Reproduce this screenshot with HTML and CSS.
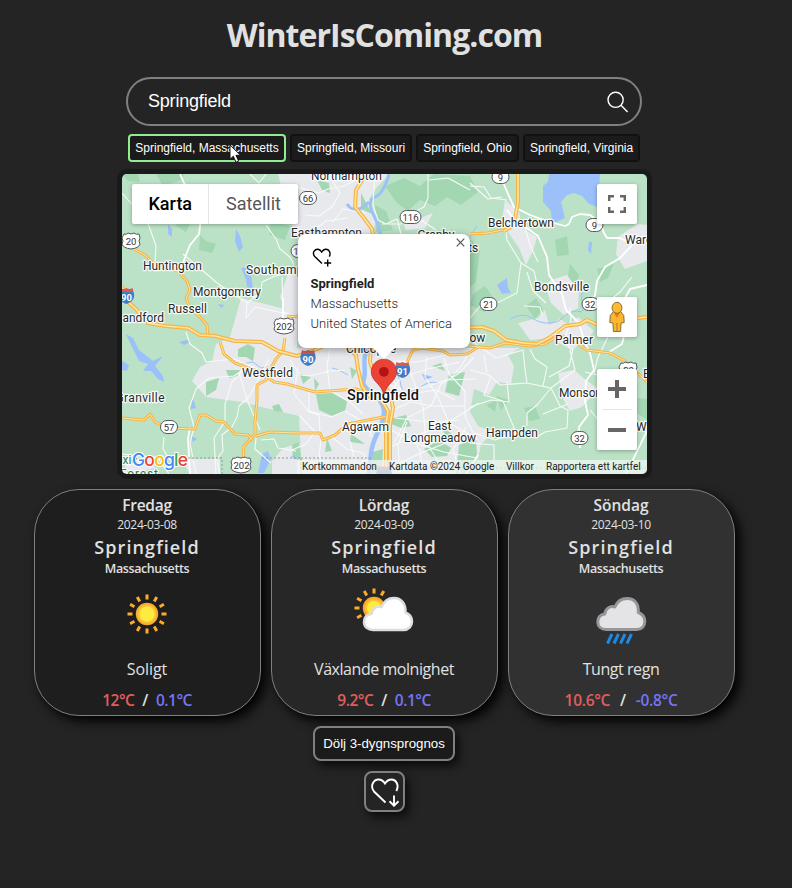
FILE: index.html
```html
<!DOCTYPE html>
<html lang="sv">
<head>
<meta charset="utf-8">
<title>WinterIsComing.com</title>
<link rel="stylesheet" href="styles.css">
</head>
<body>
<main class="page">
  <h1 class="title">WinterIsComing.com</h1>
  <div class="search">
    <span class="search-text">Springfield</span>
    <svg class="search-icon" width="22" height="22" viewBox="0 0 22 22"><circle cx="8.600" cy="8.800" r="7.600"/><path d="M14 14.300 20.600 21"/></svg>
  </div>
  <div class="suggestions">
    <button class="chip active">Springfield, Massachusetts</button>
    <button class="chip">Springfield, Missouri</button>
    <button class="chip">Springfield, Ohio</button>
    <button class="chip">Springfield, Virginia</button>
    <svg class="cursor" width="14" height="20" viewBox="0 0 14 20"><path d="M1 1V15.300L4.300 12.200 7 18.300 9.600 17.100 7 11.300H11.600Z"/></svg>
  </div>

  <section class="map">
    <svg class="map-canvas" width="525" height="300" viewBox="122 174 525 300">
      <rect class="land" x="122" y="174" width="525" height="300"/>
      <g class="forest">
        <path d="M156 174 184 174 181 180 163 186ZM122 174 138 174 140 182 128 181ZM200 235 206 241 216 244 212 253 199 250ZM208 198 222 190 226 204 214 213ZM180 214 192 220 186 232 176 226ZM270 220 290 226 285 240 270 235ZM385 186 404 178 420 186 434 174 470 176 478 192 461 205 447 197 435 206 420 200 408 211 397 203ZM375 205 386 211 393 230 376 232ZM555 240 567 236 569 255 557 256ZM570 264 579 275 576 288 567 282ZM473 294 485 286 492 296 484 312 470 305ZM526 306 536 298 543 309 535 319ZM597 269 614 264 608 278 600 282ZM470 240 480 250 476 282 469 288ZM240 345 256 346 250 362ZM620 396 647 399 647 420 637 413 620 416ZM496 396 509 400 501 410ZM524 408 535 406 540 419 529 421ZM560 380 568 378 566 390Z"/>
      </g>
      <g class="urban">
        <path d="M241 298 297 312V348H520L508 355 514 366 511 384 497 382 489 395 474 389 470 412 478 426 494 432 481 444 475 474H302L299 416 241 402 206 397 192 381 200 367 212 361 216 344 230 337Z"/>
        <path d="M278 174H390L377 187 369 199 376 217 373 236 340 250 310 243 291 230 297 210 285 201Z"/>
        <path d="M505 200 519 212 522 228 537 237 533 251 526 265 519 248 508 232 502 220ZM637 224 647 225V261L625 269 616 254 618 237ZM551 280 567 275 579 291 578 308 564 315 551 303 545 286ZM518 323 538 318 545 310 549 325 560 319 569 325 578 317 594 331 585 341 572 350 550 338 530 340ZM558 373 574 370 586 380 598 389 582 407 570 411 563 399ZM283 448 300 443V474H272V461ZM181 459H220V474H190ZM123 463 150 458 155 468 130 474ZM401 218 416 220 433 213 425 228 406 230ZM290 268H298V314H287L280 297Z"/>
      </g>
      <g class="forest">
        <path d="M238 349 248 344 255 348 253 361 246 357 238 357ZM206 382 219 378 216 390 206 396ZM226 370 240 370 238 376 229 378ZM272 406 279 404 283 412 274 411ZM316 394 332 393 347 401 345 412 332 416 319 410ZM314 378 319 384 315 391ZM393 418 406 415 411 426 401 428 391 424ZM373 452 383 449 382 473 372 473ZM327 438 332 451 325 452ZM449 375 465 372 459 396 445 392ZM432 366 441 363 445 371ZM350 367 357 371 352 379ZM424 449 439 440 451 448 447 456 432 457ZM440 425 456 437 449 442ZM292 445 299 442 301 459 293 459ZM459 445 476 438 478 474H456ZM486 405 497 400 495 412ZM317 180 329 183 330 193 322 190ZM361 193 372 214 361 209ZM300 374 311 377 303 384ZM351 434 365 444 350 442Z"/>
      </g>
      <g class="water">
        <path d="M126 334 133 338 139 350 153 361 163 356 155 366 163 376 164 382 158 379 151 371 143 371 148 364 139 361 134 351ZM179 342 187 340 190 342 184 345ZM122 361 129 365 127 371 122 370ZM241 268 249 267 251 274 253 289 247 287 246 279ZM236 229 240 236 243 247 239 252 235 241ZM168 224 172 229 172 237 168 234ZM543 186 548 182 549 174H600L598 207 589 204 582 196 574 193 567 195 561 202 565 218 552 224 551 211 543 202ZM497 285 507 278 508 288 511 293 502 294ZM589 242 592 242 591 254 588 250ZM192 396 196 408 191 409ZM191 436 197 439 193 442ZM262 454 268 451 271 459 264 473H258ZM422 374 433 377 425 380ZM218 304 225 305 221 308Z"/>
        <path class="river" d="M389 174Q384 193 375 197T374 216T380 240M347 204q8 12 22-2"/>
        <path class="river wide" d="M369 345C360 360 368 371 363 382 364 393 382 393 384 411 384 427 373 435 371 453L369 474"/>
        <path class="thin" d="M391 369q9 6 10 17t19 2q8-8 18-5M242 364l11-2 8 6 7-1 3 8M510 319q13-7 22-1t18 5 10-3q11-12 22-8M348 375q-10-6-16-7M298 460q-2-4-7-4M477 226q-7 8-9 17M583 287q-3 12 0 24"/>
      </g>
      <g class="minor">
        <path d="M122 193 129 201 141 213 149 226 156 246 155 262M250 174 259 183 266 174M266 225 276 239 280 249 290 257 294 265M297 270 273 277 262 282 261 291 248 303 232 294 216 282 202 270 183 254M247 303 246 318 255 307 292 315M282 277 283 312 300 318M186 332 190 344 202 353 206 362 234 359 258 369M209 378 196 389 189 408 194 427 190 443 196 474M209 378 234 376 247 367M247 367 232 382 225 404 225 421 214 438 216 474M239 373 248 402 260 430M269 359 249 397 239 406 237 417 232 427 222 435 223 451 217 459 220 474M164 437 163 449 170 460 189 465M122 454 158 458 169 474M261 440 274 439 278 448 296 451M256 438 255 449 271 463"/>
        <path d="M297 187 319 193 328 189 344 186 356 180M328 174 340 193 332 207 319 216 305 215M313 247 309 234 326 221 348 218M365 213 343 209 333 222M375 174 374 187 373 205 378 220 386 224 397 219M428 174 428 198 424 207 408 215 401 224 382 224M397 219 401 234M436 230 421 220 409 224M470 190 448 178 429 180M470 183 488 199 502 197"/>
        <path d="M470 186 484 187 491 198 507 200M505 223 507 240 521 263 534 271 537 284M521 263 517 293 499 302 482 304 470 318M527 272 533 291 546 303M525 227 530 245 538 262M470 370 489 375 500 385 527 383M470 340 496 358 523 350 525 369 527 383 551 388 575 370 570 350M507 382 509 402 491 400 470 407M491 376 484 395 503 401 516 433 495 440 475 433M530 349 535 359 547 367 543 386M551 388 537 405 527 413 527 426M551 388 560 406 568 410 567 428 545 432 535 438M470 443 494 445 494 464M543 414 568 404M585 372 598 375M590 410 600 422M573 351 564 341 571 320 570 308M549 377 569 366 573 349M524 306 540 307 542 315M632 277 620 292 609 301 609 335 598 357 594 373"/>
        <path d="M290 360 300 375 310 376 329 371 345 370M298 367 294 394 309 412 319 415 320 433M330 348 327 366 330 390 351 403 363 414M309 392 309 411 331 417 345 411 360 420M300 416 315 432 306 444 292 450M321 440 319 456 327 470M332 437 347 449 363 453 372 470M350 441 357 470M369 420 371 437M394 361 417 362 445 355M398 400 411 389 426 387 446 380 476 379M390 411 411 402 432 406 464 406M384 399 402 377 428 369 460 362M405 360 414 382 423 407 426 442 446 474M427 357 425 377 438 397 449 423 469 434M444 358 449 374 465 391 465 417 477 440M474 357 458 374 441 384 431 406 407 418 394 443M395 418 421 421 439 422 459 420M391 430 414 443 444 452 477 458M390 447 411 438 447 423 479 403M394 466 421 453 453 440M423 474 420 451 412 437M460 474 453 450 466 427M401 389 388 376M390 385 410 394 436 390 455 400M471 348 462 365 451 378M484 355 487 373M400 474 398 445 407 422"/>
      </g>
      <g class="local">
        <path d="M501 177 508 194 514 207 530 215 550 222 565 226 569 224 572 217 580 214 590 215 600 222 604 233 607 238 620 238 628 242 635 242 647 236M507 210 514 219 538 236 547 257 549 275 562 294 566 310 579 323 585 343 590 353 594 370 586 381 585 401 588 415 579 427 580 448M635 242 620 258 605 267 597 281 595 295 591 303M606 354 622 344 625 332M201 218 199 234 190 245 186 255 180 270M204 221 199 213 201 207 184 183 180 174M647 431 626 474M190 427 188 439 190 474M283 298 283 325M647 285 630 289 624 300M466 474 478 455"/>
      </g>
      <path class="border" d="M144 458H222V474M262 458H301V468H647M301 458H372"/>
      <g class="road-case">
        <path id="r1" d="M134 249 145 255 153 263 165 267 178 271 183 277 187 281 190 290 186 298 190 308 199 316 207 325 208 337M220 342 224 354 235 363 248 368 261 372 274 382 287 384 315 392 342 390 357 389 366 393M285 338 283 351 276 359 270 370 266 380 257 385 257 400 255 422 255 434 244 446 242 474M256 436 270 432 297 433 320 433 323 440 335 435 348 424 368 420 388 416M122 418 144 420 150 414 155 422 168 428 195 429 200 415 206 415 216 421 224 422 235 434 248 435 253 441M287 316 298 317M470 234 488 233 507 229 515 225M470 346 490 348 505 343 530 346 545 344 560 335 573 341 587 350 610 353 625 361 647 382M407 362 413 350 422 348 443 351 450 355 467 354 480 346"/>
      </g>
      <use class="road" href="#r1"/>
      <g class="highway-case"><path id="r2" d="M122 286 126 300 136 309 148 323 165 326 188 328 200 335 215 336 235 341 262 342 278 351 297 356 310 352 324 346 348 338 380 336 430 342 460 328 482 327 494 331 506 340 523 343 537 344 549 338 565 326 580 324 587 320 598 325 620 320 647 317M366 174 356 190 355 207 364 218 372 229 374 240M345 345 356 355 358 369 362 386 370 397 381 399 388 411 386 424 386 474M371 346 370 362 376 378 390 393 393 408 390 425 390 474M518 174 518 202 514 225 504 231"/></g>
      <use class="highway" href="#r2"/>

      <g class="shield">
        <rect x="299.500" y="191.500" width="17" height="13" rx="6.500"/><text x="308" y="202">66</text>
        <rect x="400" y="210.500" width="21" height="13" rx="6.500"/><text x="410.500" y="221">116</text>
        <rect x="291" y="244.500" width="17" height="13" rx="6.500"/><text x="296" y="255">1</text>
        <rect x="492" y="170.500" width="17" height="13" rx="6.500"/><text x="500.500" y="181">9</text>
        <rect x="586" y="218.500" width="17" height="13" rx="6.500"/><text x="594.500" y="229">9</text>
        <rect x="480" y="297.500" width="17" height="13" rx="6.500"/><text x="488.500" y="308">21</text>
        <rect x="582" y="297.500" width="17" height="13" rx="6.500"/><text x="590" y="308">32</text>
        <rect x="160.500" y="420.500" width="17" height="13" rx="6.500"/><text x="169" y="431">57</text>
        <rect x="571" y="431.500" width="17" height="13" rx="6.500"/><text x="579.500" y="442">32</text>
        <path d="M124 234q3 1 4-1 3 2 6 0 2 2 5 1l1 4q-2 3 0 6-1 4-9 5-8-1-9-5 2-3 0-6Z"/><text x="131" y="245">20</text>
        <path d="M276 319q3 1 4-1 4 2 8 0 2 2 5 1l1 4q-2 3 0 6-1 4-10 5-9-1-10-5 2-3 0-6Z"/><text x="284" y="330">202</text>
        <path d="M233 458q3 1 4-1 4 2 8 0 2 2 5 1l1 4q-2 3 0 6-1 4-10 5-9-1-10-5 2-3 0-6Z"/><text x="241.500" y="469">202</text>
        <path d="M621 363q3 1 4-1 3 2 6 0 2 2 5 1l1 4q-2 3 0 6-1 4-9 5-8-1-9-5 2-3 0-6Z"/><text x="628.500" y="374">20</text>
      </g>
      <g class="interstate">
        <g transform="translate(126.500 296)"><path d="M-7-4H7C9 2 6 6 0 8-6 6-9 2-7-4Z"/><path class="red" d="M-7-4-6-8Q-3-6 0-8 3-6 6-8L7-4Z"/><text y="4.500">90</text></g>
        <g transform="translate(308 358)"><path d="M-7-4H7C9 2 6 6 0 8-6 6-9 2-7-4Z"/><path class="red" d="M-7-4-6-8Q-3-6 0-8 3-6 6-8L7-4Z"/><text y="4.500">90</text></g>
        <g transform="translate(402.500 370)"><path d="M-7-4H7C9 2 6 6 0 8-6 6-9 2-7-4Z"/><path class="red" d="M-7-4-6-8Q-3-6 0-8 3-6 6-8L7-4Z"/><text y="4.500">91</text></g>
        <g transform="translate(384 474)"><path d="M-7-4H7C9 2 6 6 0 8-6 6-9 2-7-4Z"/><path class="red" d="M-7-4-6-8Q-3-6 0-8 3-6 6-8L7-4Z"/></g>
      </g>
      <g class="label">
        <text x="311" y="179.500" textLength="71">Northampton</text>
        <text x="291" y="237" textLength="71">Easthampton</text>
        <text x="417.500" y="239" textLength="37">Granby</text>
        <text x="468" y="252">ts</text>
        <text x="246" y="273.500" textLength="76">Southampton</text>
        <text x="143" y="269.500" textLength="59">Huntington</text>
        <text x="193" y="295.500" textLength="68">Montgomery</text>
        <text x="168" y="312.500" textLength="39">Russell</text>
        <text x="122.500" y="321.500" textLength="41.500">andford</text>
        <text x="242" y="376.500" textLength="51">Westfield</text>
        <text x="115.500" y="401.500" textLength="49">Granville</text>
        <text x="488" y="227" textLength="66">Belchertown</text>
        <text x="625" y="243.500">Ware</text>
        <text x="534" y="290.500" textLength="55">Bondsville</text>
        <text x="469.500" y="341.500">ow</text>
        <text x="555" y="343.500" textLength="38">Palmer</text>
        <text x="559" y="396.500" textLength="43">Monson</text>
        <text x="643" y="378">Brim</text>
        <text x="636" y="431">Wales</text>
        <text x="486" y="437" textLength="52">Hampden</text>
        <text x="428" y="429.500" textLength="23.500">East</text>
        <text x="404" y="441.500" textLength="72">Longmeadow</text>
        <text x="342" y="430.500" textLength="47">Agawam</text>
        <text x="346" y="352.500" textLength="50">Chicopee</text>
        <text class="city" x="347" y="400" textLength="72">Springfield</text>
        <g class="park"><text x="122.500" y="463.500">xic</text><text x="120" y="477.500" textLength="38">Forest</text></g>
      </g>
      <path class="pin-body" d="M383.900 359.200c-7.200 0-12.600 5.600-12.600 12.500 0 9.600 9.700 11.500 12.100 21.800q.5 1.300 1 0c2.400-10.300 12.100-12.200 12.100-21.800 0-6.900-5.400-12.500-12.600-12.500Z"/>
      <circle class="pin-dot" cx="383.900" cy="371.800" r="4.900"/>
      <g class="google"><text x="132" y="466" textLength="56"><tspan class="b">G</tspan><tspan class="r">o</tspan><tspan class="y">o</tspan><tspan class="b">g</tspan><tspan class="g">l</tspan><tspan class="r">e</tspan></text></g>
    </svg>

    <div class="map-types"><span class="on">Karta</span><span class="off">Satellit</span></div>
    <div class="control fullscreen"><svg width="18" height="18" viewBox="0 0 18 18"><path d="M1.200 6V1.200H6M12 1.200h4.800V6M16.800 12v4.800H12M6 16.800H1.200V12"/></svg></div>
    <div class="control pegman">
      <svg width="18" height="32" viewBox="0 0 20 32" preserveAspectRatio="none"><path d="M6 10.500 2.500 14.500 2 21.500 5.500 22 6 30.500H14L14.500 22 18 21.500 17.500 14.500 14 10.500Z" fill="#fbb52e" stroke="#7c6a38"/><path d="M6.500 11.500H13.500L10 17Z" fill="#e37a2b"/><path d="M10 22v8.500" stroke="#a77b2b"/><circle cx="10" cy="6.800" r="5.500" fill="#fcbb2e" stroke="#7c6a38"/></svg>
    </div>
    <div class="control zoom">
      <svg width="40" height="81" viewBox="0 0 40 81"><path d="M11 20H29M20 11V29M11 61H29" stroke="#666" stroke-width="4"/><path d="M5 40.500H35" stroke="#e6e6e6"/></svg>
    </div>

    <div class="popup">
      <svg class="popup-heart" width="20" height="20" viewBox="0 0 20 20"><path d="M10 15.500 2.700 8.500C-.5 4.500 3 1 6 1.300 8 1.500 9 3 9.700 4 10.400 3 11.400 1.500 13.400 1.300 17 1 19.200 4.500 17.300 8.600M15.700 11.500V18.500M12.200 15H19.200"/></svg>
      <svg class="popup-close" width="9" height="9" viewBox="0 0 9 9"><path d="M.7.700 8.300 8.300M8.300.700.7 8.300"/></svg>
      <strong>Springfield</strong>
      <span>Massachusetts</span>
      <span>United States of America</span>
    </div>

    <div class="attribution"><span>Kortkommandon</span><span>Kartdata ©2024 Google</span><span>Villkor</span><span>Rapportera ett kartfel</span></div>
  </section>

  <section class="forecast">
    <article class="card day-1">
      <div class="day">Fredag</div>
      <div class="date">2024-03-08</div>
      <div class="place">Springfield</div>
      <div class="region">Massachusetts</div>
      <svg class="weather" width="64" height="64" viewBox="0 0 64 64">
        <g transform="translate(32 32)"><path class="rays" d="M0-14.500V-19.500M7.250-12.560 9.750-16.890M12.560-7.250 16.890-9.750M14.500 0H19.500M12.560 7.250 16.890 9.750M7.250 12.560 9.750 16.890M0 14.500V19.500M-7.250 12.560-9.750 16.890M-12.560 7.250-16.890 9.750M-14.500 0H-19.500M-12.560-7.250-16.890-9.750M-7.250-12.560-9.750-16.890"/><circle r="11.200" fill="#fbab2c"/><circle r="9.500" fill="#fcc433"/><circle r="7.500" fill="#fdec3f"/></g>
      </svg>
      <div class="condition short">Soligt</div>
      <div class="temps"><span class="high">12°C</span><span>/</span><span class="low">0.1°C</span></div>
    </article>
    <article class="card day-2">
      <div class="day">Lördag</div>
      <div class="date">2024-03-09</div>
      <div class="place">Springfield</div>
      <div class="region">Massachusetts</div>
      <svg class="weather" width="64" height="64" viewBox="0 0 64 64">
        <g transform="translate(22 26)"><path class="rays" d="M0-14.500V-19.500M7.250-12.560 9.750-16.890M-12.560 7.250-16.890 9.750M-14.500 0H-19.500M-12.560-7.250-16.890-9.750M-7.250-12.560-9.750-16.890"/><circle r="11.200" fill="#fbab2c"/><circle r="9" fill="#fcc433"/><circle r="7" fill="#fdec3f"/></g>
        <path class="cloud white" transform="translate(11 15)" d="M10 33C5 33 1 30 1 25 1 20 4.500 17.500 8.500 17 9 11.500 14 8.500 18.500 10 21 4 25.500 1 31 1 38 1 43 6.500 42.500 15.500 46.500 17 49 20.500 49 24.500 49 29.500 45.500 33 40.500 33Z"/>
      </svg>
      <div class="condition">Växlande molnighet</div>
      <div class="temps"><span class="high">9.2°C</span><span>/</span><span class="low">0.1°C</span></div>
    </article>
    <article class="card day-3">
      <div class="day wide-day">Söndag</div>
      <div class="date">2024-03-10</div>
      <div class="place">Springfield</div>
      <div class="region">Massachusetts</div>
      <svg class="weather" width="64" height="64" viewBox="0 0 64 64">
        <path class="cloud grey" transform="translate(7.300 15)" d="M10 32.500C5 32.500 1.500 29.500 1.500 25 1.500 20 4.500 17.500 8.500 17 9 11.500 14 8.500 18.500 10 21 4 25.500 1.500 31 1.500 38 1.500 42.500 6.500 42 15.500 46 17 48.500 20.500 48.500 24.500 48.500 29 45.500 32.500 40.500 32.500Z"/>
        <path d="M18.500 61.500 23 52M25 61.500 29.500 52M31.500 61.500 36 52M38 61.500 42.500 52" stroke="#2188e0" stroke-width="3"/>
      </svg>
      <div class="condition">Tungt regn</div>
      <div class="temps spaced"><span class="high">10.6°C</span><span>/</span><span class="low">-0.8°C</span></div>
    </article>
  </section>

  <button class="toggle">Dölj 3-dygnsprognos</button>
  <button class="favorites"><svg width="30" height="30" viewBox="0 0 30 30"><path d="M15.500 25.500 4 14.500C-.5 8.500 4 2.500 8.500 2.500 12 2.500 13.700 4.500 15 6.500 16.300 4.500 18 2.500 21.500 2.500 26 2.500 29.500 8 26.300 14M24 18.500V28.500M19.500 24.300 24 28.700 28.500 24.300"/></svg></button>
</main>
</body>
</html>
```

FILE: styles.css
```css
* { box-sizing: border-box; }
body {
  margin: 0;
  background: #242424;
  color: #e1e1e1;
  font-family: "Open Sans", "Noto Sans", sans-serif;
}
.page {
  width: 769px;
  min-height: 100vh;
  display: flex;
  flex-direction: column;
  align-items: center;
}
.title {
  margin: 0;
  padding-top: 13px;
  height: 77px;
  font-size: 32px;
  line-height: 44px;
  font-weight: 700;
  letter-spacing: -.97px;
}
button { font-family: "Liberation Sans", sans-serif; color: #fff; padding: 0; }
.search {
  width: 516px;
  height: 49px;
  margin-right: 1px;
  border: 2px solid #808080;
  border-radius: 25px;
  display: flex;
  align-items: center;
  justify-content: space-between;
  padding: 0 11px 0 20px;
  font: 18px "Liberation Sans", sans-serif;
  letter-spacing: -.2px;
  color: #fff;
}
.search-icon { fill: none; stroke: #fff; stroke-width: 1.4; }
.suggestions {
  position: relative;
  display: flex;
  gap: 4px;
  margin: 8px 1px 7px 0;
}
.chip {
  height: 28px;
  border: 2px solid #111;
  border-radius: 4px;
  background: #1b1b1b;
  font-size: 12px;
  padding: 0 5px;
  white-space: nowrap;
}
.chip.active { border-color: #90ee90; }
.chip:nth-child(1) { width: 158px; }
.chip:nth-child(2) { width: 122px; }
.chip:nth-child(3) { width: 103px; }
.chip:nth-child(4) { width: 117px; }
.cursor { position: absolute; left: 101px; top: 10px; fill: #fff; stroke: #111; stroke-width: 1; }

.map {
  position: relative;
  width: 535px;
  height: 310px;
  border: 5px solid #1a1a1a;
  border-radius: 10px;
}
.map-canvas { display: block; border-radius: 5px; font-family: Roboto, sans-serif; }
.land { fill: #bbe2c6; }
.forest { fill: #a2d7b2; }
.urban { fill: #e8e9ed; }
.water { fill: #9cc0f9; }
.river { fill: none; stroke: #9cc0f9; stroke-width: 3; }
.wide { stroke-width: 4.5; }
.thin { fill: none; stroke: #9cc0f9; stroke-width: 1; }
.minor { fill: none; stroke: #f7faf8; stroke-width: 1.1; stroke-linejoin: round; }
.local { fill: none; stroke: #fff; stroke-width: 1.8; stroke-linejoin: round; }
.border { fill: none; stroke: #8b9a95; stroke-width: 1; stroke-dasharray: 2 2; }
.road-case, .highway-case { stroke: #f6b445; stroke-linejoin: round; fill: none; }
.road-case { stroke-width: 3; }
.highway-case { stroke-width: 4; }
.shield { fill: #fff; stroke: #55585b; stroke-width: 1; font-size: 9.5px; text-anchor: middle; }
.shield text, .interstate text { stroke: none; }
.shield text { fill: #333; }
.interstate { fill: #3d7cc9; font-size: 9.5px; font-weight: 700; text-anchor: middle; }
.interstate text { fill: #fff; }
.interstate .red { fill: #d95a50; }
.road, .highway { fill: none; stroke: #fee5a1; }
.road { stroke-width: 1; }
.highway { stroke-width: 1.6; }
.label { font-size: 12px; fill: #26292c; stroke: #fff; stroke-width: 2.5; stroke-opacity: .85; stroke-linejoin: round; }
.label text { paint-order: stroke; }
.label .city { font-size: 14.5px; font-weight: 500; fill: #111; }
.park { fill: #2e7d50; }
.pin-body { fill: #ea4335; stroke: #c5362b; stroke-width: .8; }
.pin-dot { fill: #b31412; }
.google { font: 500 17.5px Inter, sans-serif; stroke: #fff; stroke-width: 2; }
.google text { paint-order: stroke; }
.google .b { fill: #4285f4; }
.google .r { fill: #ea4335; }
.google .y { fill: #fbbc04; }
.google .g { fill: #34a853; }

.map-types {
  position: absolute;
  left: 10px;
  top: 10px;
  width: 166px;
  height: 40px;
  display: flex;
  background: #fff;
  border-radius: 2px;
  box-shadow: 0 1px 4px rgba(0, 0, 0, .3);
  font: 18px/40px Roboto, sans-serif;
}
.on { width: 77px; padding-left: 16.5px; border-right: 1px solid #e6e6e6; color: #000; font-weight: 500; }
.off { padding-left: 17px; color: #565656; }
.control {
  position: absolute;
  right: 10px;
  width: 40px;
  height: 40px;
  background: #fff;
  border-radius: 2px;
  box-shadow: 0 1px 4px rgba(0, 0, 0, .3);
  display: flex;
  align-items: center;
  justify-content: center;
}
.fullscreen { top: 10px; }
.fullscreen svg { fill: none; stroke: #666; stroke-width: 2.4; }
.pegman { top: 123px; }
.zoom { top: 195px; height: 81px; }

.popup {
  position: absolute;
  left: 176px;
  top: 60px;
  width: 172px;
  height: 114px;
  padding: 40px 0 0 12.5px;
  background: #fff;
  border-radius: 8px;
  box-shadow: 0 2px 7px 1px rgba(0, 0, 0, .3);
  color: #222;
  font: 300 13px/20px Roboto, sans-serif;
  display: flex;
  flex-direction: column;
  align-items: flex-start;
  white-space: nowrap;
}
.popup::after {
  content: "";
  position: absolute;
  left: 75px;
  top: 114px;
  border: 11px solid transparent;
  border-top-color: #fff;
  border-bottom: 0;
}
.popup strong { font-weight: 700; }
.popup-heart { position: absolute; left: 14px; top: 14px; fill: none; stroke: #000; stroke-width: 1.4; }
.popup-close { position: absolute; right: 5px; top: 4px; fill: none; stroke: #555; stroke-width: 1.2; }

.attribution {
  position: absolute;
  right: 0;
  bottom: 0;
  width: 350px;
  height: 14px;
  display: grid;
  grid-template-columns: 87px 117px 40px 1fr;
  padding-left: 5px;
  background: rgba(240, 245, 241, .75);
  border-radius: 0 0 5px 0;
  color: #222;
  font: 10px/14px Roboto, sans-serif;
  white-space: nowrap;
}

.forecast { display: flex; gap: 10px; margin-top: 10px; }
.card {
  width: 227px;
  height: 227px;
  padding-right: 1px;
  border: 1px solid #808080;
  border-radius: 45px;
  box-shadow: 5px 5px 12px #000;
  display: flex;
  flex-direction: column;
  align-items: center;
  white-space: nowrap;
}
.day-1 { background: #1e1e1e; }
.day-2 { background: #272727; }
.day-3 { background: #313131; }
.day { margin-top: 4px; height: 23px; font-size: 15.5px; line-height: 23px; font-weight: 600; letter-spacing: -.25px; }
.wide-day { letter-spacing: 0; }
.date { height: 16px; font-size: 12px; line-height: 16px; letter-spacing: -.31px; }
.place { height: 26px; font-size: 18px; line-height: 28px; font-weight: 600; letter-spacing: 1.1px; }
.region { height: 18px; font-size: 12.5px; line-height: 20px; font-weight: 600; letter-spacing: -.4px; }
.weather { margin-top: 5px; }
.cloud { stroke-linejoin: round; }
.white { fill: #fff; stroke: #dcdde0; stroke-width: 2.5; }
.grey { fill: #e4e4e7; stroke: #96979b; stroke-width: 3; }
.rays { stroke: #fbab2c; stroke-width: 3; fill: none; }
.condition { height: 24px; margin-top: 10px; font-size: 16px; line-height: 26px; letter-spacing: -.45px; }
.condition.short { letter-spacing: -.05px; }
.temps { display: flex; gap: 8px; margin-top: 8px; font-size: 15.5px; line-height: 24px; font-weight: 600; letter-spacing: -.5px; }
.temps.spaced { gap: 10px; letter-spacing: -.3px; }
.high { color: #e35d5d; }
.low { color: #7474f5; }

.toggle, .favorites {
  border: 2px solid #808080;
  border-radius: 8px;
  margin-top: 10px;
  box-shadow: 4px 5px 10px rgba(0, 0, 0, .7);
}
.toggle { width: 142px; height: 35px; margin-right: 1px; background: #1b1b1b; font-size: 13.3px; letter-spacing: -.02px; white-space: nowrap; }
.favorites { width: 41px; height: 41px; background: #242424; display: flex; align-items: center; justify-content: center; }
.favorites svg { fill: none; stroke: #fff; stroke-width: 1.9; }
```
